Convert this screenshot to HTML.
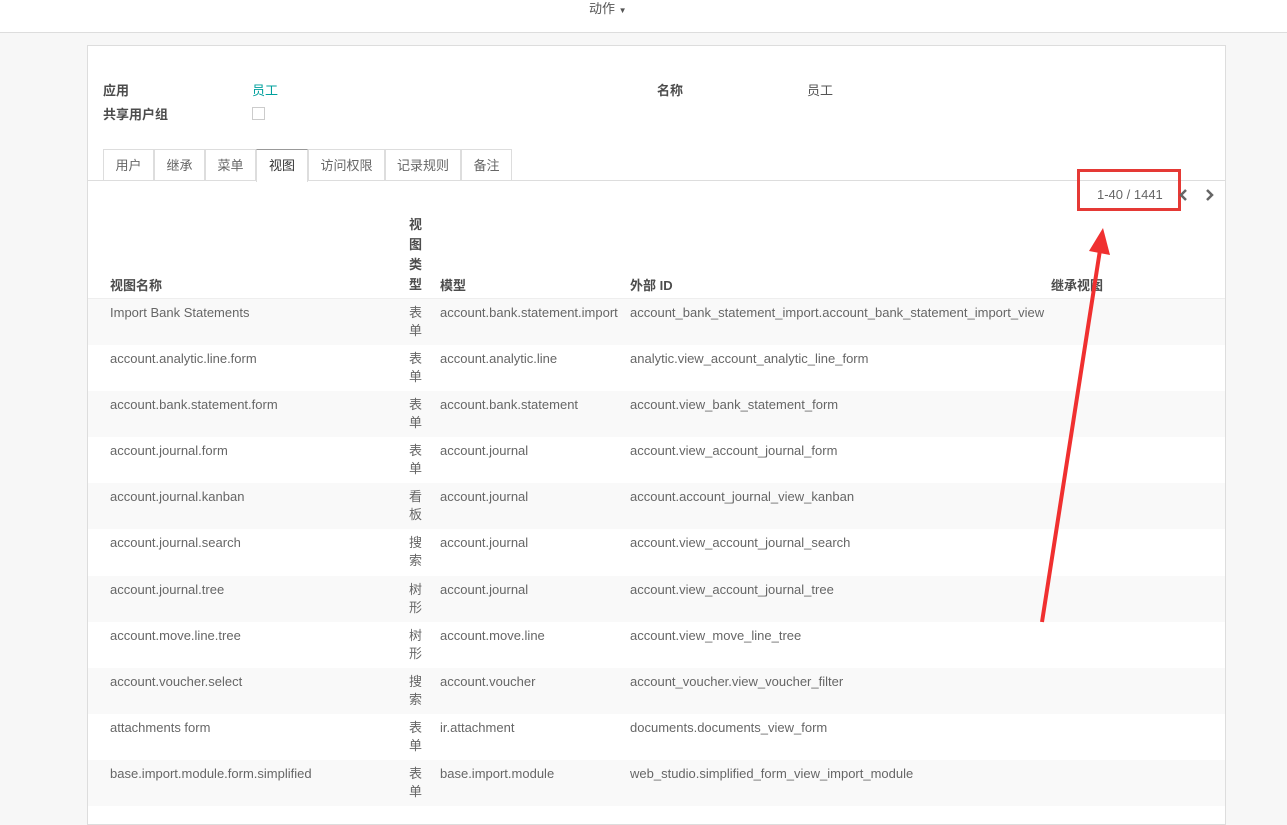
<!DOCTYPE html>
<html><head><meta charset="utf-8"><style>
*{margin:0;padding:0;box-sizing:border-box}
body{width:1287px;height:809px;overflow:hidden;background:#f7f7f7;font-family:"Liberation Sans","Noto Sans CJK SC",sans-serif;font-size:13px;color:#666;position:relative}
.top{position:absolute;left:0;top:0;width:1287px;height:33px;background:#fff;border-bottom:1px solid #ddd}
.card{position:absolute;left:87px;top:45px;width:1139px;height:780px;background:#fff;border:1px solid #ddd}
.a{position:absolute;white-space:nowrap}
.b{font-weight:bold;color:#4c4c4c}
.tabs{position:absolute;left:103px;top:149px;height:32px}
.tab{position:absolute;top:0;height:32px;border:1px solid #ddd;border-bottom:none;line-height:31px;text-align:center;color:#666}
.row{position:absolute;left:88px;width:1137px;height:46px}
.row.g{background:#f9f9f9}
.row span{position:absolute;top:5px;line-height:18px}
</style></head><body>
<div class="top"><span class="a" style="left:589px;top:-2px;color:#555">动作 <span style="font-size:8px">▼</span></span></div>
<div class="card"></div>
<span class="a b" style="left:103px;top:80px">应用</span>
<span class="a" style="left:252px;top:80px;color:#00a09d">员工</span>
<span class="a b" style="left:103px;top:104px">共享用户组</span>
<div class="a" style="left:252px;top:107px;width:13px;height:13px;border:1px solid #ccc"></div>
<span class="a b" style="left:657px;top:80px">名称</span>
<span class="a" style="left:807px;top:80px;color:#555">员工</span>
<div class="a" style="left:88px;top:180px;width:1137px;height:1px;background:#ddd"></div>
<div class="tabs">
<div class="tab" style="left:0;width:51px">用户</div>
<div class="tab" style="left:51px;width:51px">继承</div>
<div class="tab" style="left:102px;width:51px">菜单</div>
<div class="tab" style="left:153px;width:52px;background:#fff;height:33px;color:#333;border-top-color:#999">视图</div>
<div class="tab" style="left:205px;width:77px">访问权限</div>
<div class="tab" style="left:282px;width:76px">记录规则</div>
<div class="tab" style="left:358px;width:51px">备注</div>
</div>
<span class="a" style="left:1097px;top:187px;color:#666">1-40 / 1441</span>
<div class="a" style="left:1077px;top:169px;width:104px;height:42px;border:3px solid #e53935"></div>
<svg class="a" style="left:1176px;top:188px" width="40" height="14"><path d="M10 2 L5 7 L10 12" stroke="#666" stroke-width="2.5" fill="none"/><path d="M31 2 L36 7 L31 12" stroke="#666" stroke-width="2.5" fill="none"/></svg>
<span class="a b" style="left:110px;top:275px">视图名称</span>
<span class="a b" style="left:409px;top:215px;line-height:20px;white-space:normal;width:14px">视图类型</span>
<span class="a b" style="left:440px;top:275px">模型</span>
<span class="a b" style="left:630px;top:275px">外部 ID</span>
<span class="a b" style="left:1051px;top:275px">继承视图</span>
<div class="a" style="left:88px;top:298px;width:1137px;height:2px;background:#eee"></div>

<div class="row g" style="top:299px"><span style="left:22px">Import Bank Statements</span><span style="left:321px;width:14px;white-space:normal">表单</span><span style="left:352px">account.bank.statement.import</span><span style="left:542px">account_bank_statement_import.account_bank_statement_import_view</span></div>
<div class="row" style="top:345px"><span style="left:22px">account.analytic.line.form</span><span style="left:321px;width:14px;white-space:normal">表单</span><span style="left:352px">account.analytic.line</span><span style="left:542px">analytic.view_account_analytic_line_form</span></div>
<div class="row g" style="top:391px"><span style="left:22px">account.bank.statement.form</span><span style="left:321px;width:14px;white-space:normal">表单</span><span style="left:352px">account.bank.statement</span><span style="left:542px">account.view_bank_statement_form</span></div>
<div class="row" style="top:437px"><span style="left:22px">account.journal.form</span><span style="left:321px;width:14px;white-space:normal">表单</span><span style="left:352px">account.journal</span><span style="left:542px">account.view_account_journal_form</span></div>
<div class="row g" style="top:483px"><span style="left:22px">account.journal.kanban</span><span style="left:321px;width:14px;white-space:normal">看板</span><span style="left:352px">account.journal</span><span style="left:542px">account.account_journal_view_kanban</span></div>
<div class="row" style="top:529px"><span style="left:22px">account.journal.search</span><span style="left:321px;width:14px;white-space:normal">搜索</span><span style="left:352px">account.journal</span><span style="left:542px">account.view_account_journal_search</span></div>
<div class="row g" style="top:576px"><span style="left:22px">account.journal.tree</span><span style="left:321px;width:14px;white-space:normal">树形</span><span style="left:352px">account.journal</span><span style="left:542px">account.view_account_journal_tree</span></div>
<div class="row" style="top:622px"><span style="left:22px">account.move.line.tree</span><span style="left:321px;width:14px;white-space:normal">树形</span><span style="left:352px">account.move.line</span><span style="left:542px">account.view_move_line_tree</span></div>
<div class="row g" style="top:668px"><span style="left:22px">account.voucher.select</span><span style="left:321px;width:14px;white-space:normal">搜索</span><span style="left:352px">account.voucher</span><span style="left:542px">account_voucher.view_voucher_filter</span></div>
<div class="row" style="top:714px"><span style="left:22px">attachments form</span><span style="left:321px;width:14px;white-space:normal">表单</span><span style="left:352px">ir.attachment</span><span style="left:542px">documents.documents_view_form</span></div>
<div class="row g" style="top:760px"><span style="left:22px">base.import.module.form.simplified</span><span style="left:321px;width:14px;white-space:normal">表单</span><span style="left:352px">base.import.module</span><span style="left:542px">web_studio.simplified_form_view_import_module</span></div>

<svg class="a" style="left:0;top:0" width="1287" height="809">
<line x1="1042" y1="622" x2="1100" y2="250" stroke="#f03030" stroke-width="4"/>
<polygon points="1103,228 1110,255 1089,251" fill="#f03030"/>
</svg>
</body></html>
